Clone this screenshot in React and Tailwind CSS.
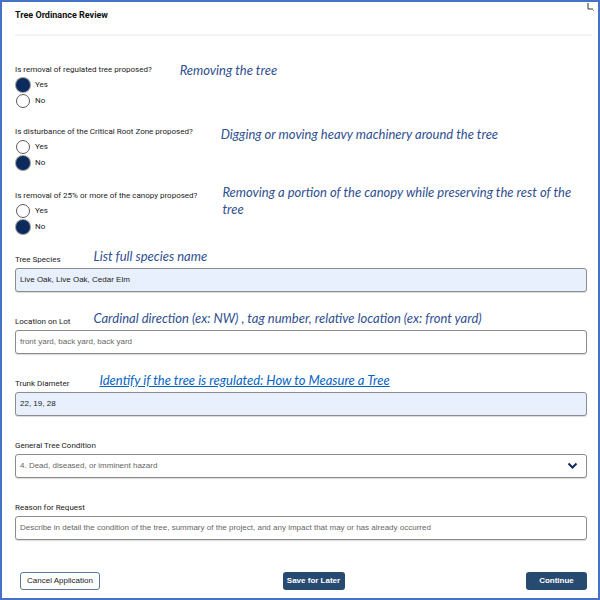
import { useState } from 'react'

const questions = [
  { label: 'Is removal of regulated tree proposed?', help: 'Removing the tree', value: 'yes', gap: 'ml-[28px]', shift: 'mt-[-3px]' },
  { label: 'Is disturbance of the Critical Root Zone proposed?', help: 'Digging or moving heavy machinery around the tree', value: 'no', gap: 'ml-[28px]', shift: 'mt-[-1px]' },
  { label: 'Is removal of 25% or more of the canopy proposed?', help: 'Removing a portion of the canopy while preserving the rest of the tree', value: 'no', gap: 'ml-[25px]', shift: 'mt-[-7px]' },
]

function Radio({ checked, label }) {
  return (
    <div className="flex items-center h-[16px]">
      {checked ? (
        <span className="w-[14px] h-[14px] rounded-full bg-[#0d2a5e] ring-1 ring-[#9a9a9a]" />
      ) : (
        <span className="w-[14px] h-[14px] rounded-full border-[1.5px] border-[#5a5a5a] bg-white" />
      )}
      <span className="ml-[5px] text-[8px] text-[#222]">{label}</span>
    </div>
  )
}

function Help({ children, className = '' }) {
  return (
    <div className={`font-['Lato','Open_Sans',sans-serif] italic text-[13px] leading-[17px] text-[#2f4f8f] ${className}`}>
      {children}
    </div>
  )
}

function Field({ label, help, helpGap, link, value, filled, placeholder, select }) {
  return (
    <div className="h-[62px] flex flex-col">
      <div className="flex items-end h-[10px]">
        <span className="text-[8px] leading-[10px] text-[#222]">{label}</span>
        {help && (
          <div className={helpGap}>
            {link ? (
              <Help className="text-[#0563c1] underline">{help}</Help>
            ) : (
              <Help>{help}</Help>
            )}
          </div>
        )}
      </div>
      <div
        className={`mt-[3px] w-[572px] h-[24px] rounded-[3px] border border-[#8c8c8c] shadow-[0_1px_1px_rgba(0,0,0,0.15)] flex items-center px-[4px] font-['Liberation_Sans',Arial,sans-serif] text-[8px] ${
          filled ? 'bg-[#e8f0fe] text-[#1a1a1a]' : 'bg-white text-[#666]'
        }`}
      >
        <span className="flex-1">{value || placeholder}</span>
        {select && (
          <svg width="11" height="8" viewBox="0 0 11 8" className="mr-[4px]">
            <path d="M1.5 1.5 L5.5 5.5 L9.5 1.5" fill="none" stroke="#0d2a5e" strokeWidth="2" />
          </svg>
        )}
      </div>
    </div>
  )
}

export default function App() {
  const [answers] = useState(questions.map((q) => q.value))

  return (
    <div className="w-[600px] h-[600px] bg-white border-2 border-[#4472c4] font-['Roboto',sans-serif] relative overflow-hidden">
      {/* little corner mark */}
      <svg className="absolute right-[3px] top-[1px]" width="8" height="9" viewBox="0 0 8 9">
        <path d="M1 0 V6 H6" fill="none" stroke="#333" strokeWidth="1" />
        <path d="M5 6 L7 8" stroke="#888" strokeWidth="1" />
      </svg>

      <div className="pl-[13px] pt-[7px]">
        <h1 className="text-[9px] leading-[12px] font-bold text-[#111]">Tree Ordinance Review</h1>
        <div className="mt-[13px] w-[577px] h-[2px] bg-[#f3f3f3]" />

        <div className="mt-[29px]">
          {questions.map((q, i) => (
            <div key={i} className={i === 0 ? 'h-[62px]' : 'h-[64px]'}>
              <div className="flex items-start h-[10px]">
                <span className="text-[8px] leading-[10px] text-[#222] shrink-0">{q.label}</span>
                <div className={`${q.gap} ${q.shift} w-[355px]`}>
                  <Help>{q.help}</Help>
                </div>
              </div>
              <div className="mt-[2px] ml-px">
                <Radio checked={answers[i] === 'yes'} label="Yes" />
                <Radio checked={answers[i] === 'no'} label="No" />
              </div>
            </div>
          ))}
        </div>

        <div>
          <Field label="Tree Species" help="List full species name" helpGap="ml-[33px]" value="Live Oak, Live Oak, Cedar Elm" filled />
          <Field label="Location on Lot" help="Cardinal direction (ex: NW) , tag number, relative location (ex: front yard)" helpGap="ml-[23px]" placeholder="front yard, back yard, back yard" />
          <Field label="Trunk Diameter" help="Identify if the tree is regulated: How to Measure a Tree" helpGap="ml-[30px]" link value="22, 19, 28" filled />
          <Field label="General Tree Condition" placeholder="4. Dead, diseased, or imminent hazard" select />
          <Field label="Reason for Request" placeholder="Describe in detail the condition of the tree, summary of the project, and any impact that may or has already occurred" />
        </div>

        <div className="mt-[7px] w-[572px] flex items-center justify-between font-['Liberation_Sans',Arial,sans-serif] text-[8px]">
          <button className="ml-[5px] w-[80px] h-[18px] rounded-[3px] border border-[#5b7a99] bg-white text-[#222]">
            Cancel Application
          </button>
          <button className="ml-px w-[62px] h-[18px] rounded-[3px] bg-[#274a70] text-white font-bold">
            Save for Later
          </button>
          <button className="w-[61px] h-[18px] rounded-[3px] bg-[#274a70] text-white font-bold">
            Continue
          </button>
        </div>
      </div>
    </div>
  )
}
